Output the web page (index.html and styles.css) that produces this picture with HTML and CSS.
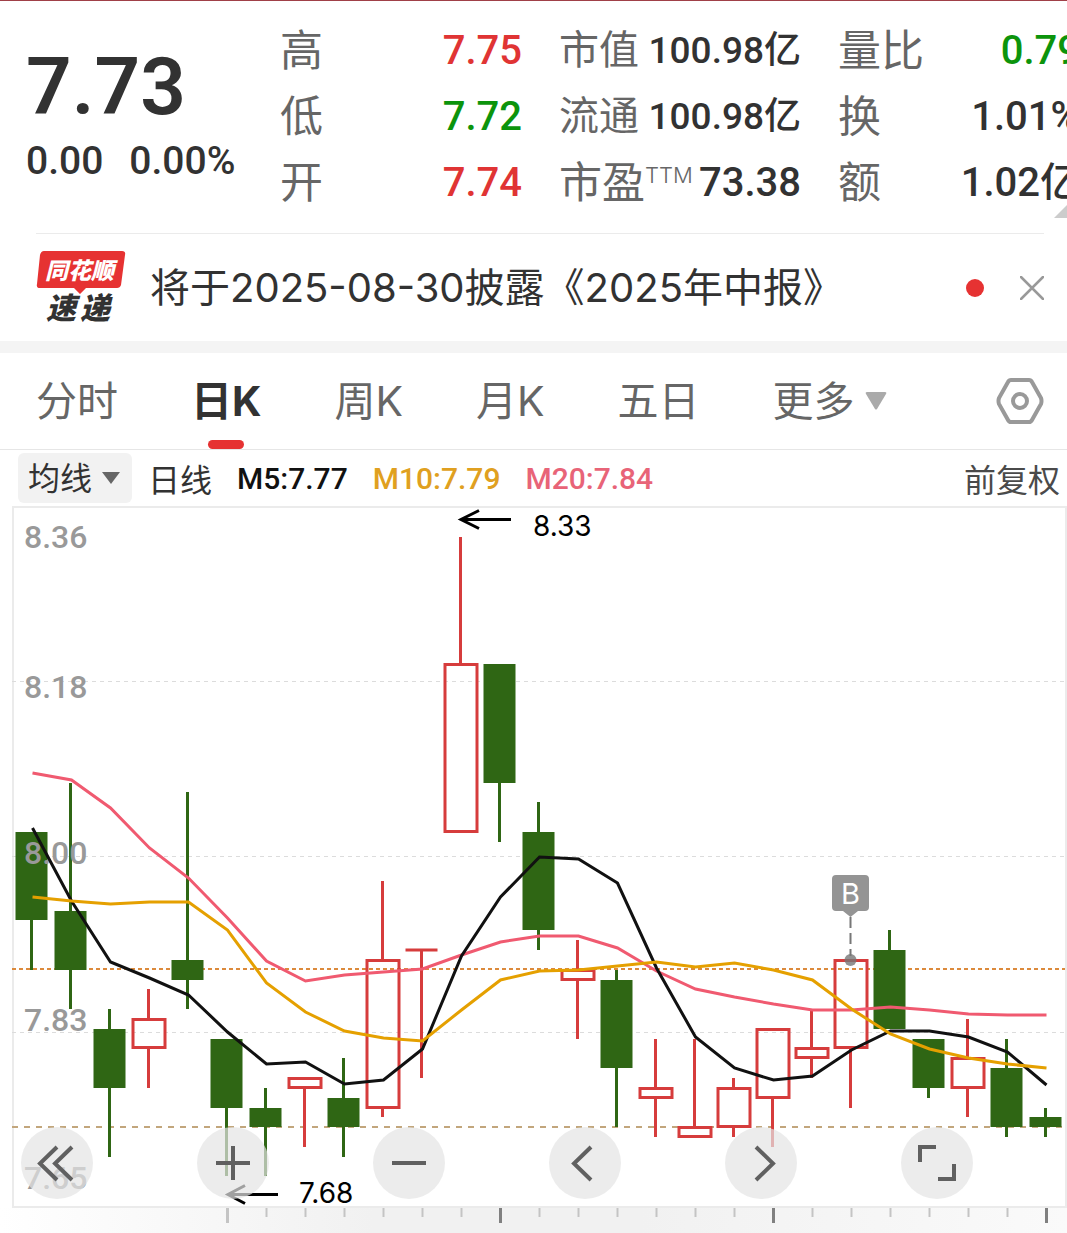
FILE: index.html
```
<!DOCTYPE html>
<html lang="zh-CN">
<head>
    <meta charset="UTF-8">
    <meta name="viewport" content="width=device-width, initial-scale=1.0">
    <title>日K</title>
    <link rel="stylesheet" href="styles.css">
</head>
<body>
    <header class="quote">
        <div class="price">
            <div class="price-now">7.73</div>
            <div class="price-change"><span>0.00</span><span>0.00%</span></div>
        </div>
        <dl class="stats">
            <div><dt>高</dt><dd class="up">7.75</dd></div>
            <div><dt>低</dt><dd class="down">7.72</dd></div>
            <div><dt>开</dt><dd class="up">7.74</dd></div>
        </dl>
        <dl class="stats">
            <div><dt class="tight">市值</dt><dd class="small">100.98亿</dd></div>
            <div><dt class="tight">流通</dt><dd class="small">100.98亿</dd></div>
            <div><dt>市盈<sup>TTM</sup></dt><dd>73.38</dd></div>
        </dl>
        <dl class="stats">
            <div><dt>量比</dt><dd class="down">0.79</dd></div>
            <div><dt>换</dt><dd>1.01%</dd></div>
            <div><dt>额</dt><dd>1.02亿</dd></div>
        </dl>
        <svg class="corner" viewBox="0 0 14 14"><path d="M14 0V14H0z" fill="#ccc"/></svg>
    </header>

    <section class="notice">
        <svg class="logo" viewBox="0 0 90 74">
            <path d="M8 0H86Q90 0 89 4L85 34Q84 37 81 37H50L44 43L38 37H4Q0 37 1 33L4 4Q5 0 8 0z" fill="#e63232"/>
            <text class="logo-top" x="9" y="28">同花顺</text>
            <text class="logo-bottom" x="10" y="68">速</text>
            <text class="logo-bottom" x="44" y="68">递</text>
        </svg>
        <a href="#" class="notice-text">将于2025-08-30披露《2025年中报》</a>
        <span class="dot"></span>
        <button class="close" aria-label="关闭">
            <svg viewBox="0 0 24 24"><path d="M1 1L23 23M23 1L1 23" fill="none" stroke="#999" stroke-width="2.5" stroke-linecap="round"/></svg>
        </button>
    </section>

    <nav class="tabs">
        <button>分时</button>
        <button class="active">日K</button>
        <button>周K</button>
        <button>月K</button>
        <button>五日</button>
        <button class="more">更多<svg viewBox="0 0 22 18"><path d="M2 0H20Q22 0 21 2L12 17Q11 18 10 17L1 2Q0 0 2 0z" fill="#aaa"/></svg></button>
        <button class="settings" aria-label="设置">
            <svg viewBox="0 0 48 46" fill="none" stroke="#999" stroke-width="4">
                <path d="M15 2H33Q35 2 36 4L45 20Q46 23 45 26L36 42Q35 44 33 44H15Q13 44 12 42L3 26Q2 23 3 20L12 4Q13 2 15 2z"/>
                <circle cx="24" cy="23" r="7"/>
            </svg>
        </button>
    </nav>

    <div class="indicators">
        <div class="select-box">
            <select aria-label="指标"><option>均线</option></select>
        </div>
        <span class="period">日线</span>
        <span class="ma ma5">M5:7.77</span>
        <span class="ma ma10">M10:7.79</span>
        <span class="ma ma20">M20:7.84</span>
        <a href="#" class="adjust">前复权</a>
    </div>

    <main class="chart">
        <svg id="kline" viewBox="0 0 1067 727">
            <defs>
                <linearGradient id="strip">
                    <stop offset="0" stop-color="#fff"/>
                    <stop offset="0.35" stop-color="#f1f1f1"/>
                    <stop offset="0.6" stop-color="#f1f1f1"/>
                    <stop offset="1" stop-color="#fafafa"/>
                </linearGradient>
            </defs>
            <rect x="0" y="701" width="1067" height="26" fill="url(#strip)"/>
            <rect x="13" y="1" width="1053" height="700" fill="#fff" stroke="#ebebeb" stroke-width="2"/>
            <path class="grid" d="M12 175.5H1065M12 350.5H1065M12 526.5H1065"/>
            <path d="M12 463H1065" stroke="#dc8a3c" stroke-width="2" stroke-dasharray="4 3"/>
            <path d="M12 621H1065" stroke="#c2a67c" stroke-width="2" stroke-dasharray="6 6"/>
            <g id="candles"></g>
            <g class="axis">
                <text x="24" y="42">8.36</text>
                <text x="24" y="192">8.18</text>
                <text x="24" y="358">8.00</text>
                <text x="24" y="525">7.83</text>
                <text x="24" y="683">7.65</text>
            </g>
            <g id="averages"></g>
            <g id="ticks"></g>
            <g class="mark">
                <path d="M511 13.5H461M479 4.5L461 13.5L479 22.5"/>
                <text x="533" y="30">8.33</text>
                <path d="M278 688.5H228M245 679.5L228 688.5L245 697.5"/>
                <text x="299" y="697">7.68</text>
            </g>
            <g>
                <path d="M850.5 411V450" stroke="#777" stroke-width="2" stroke-dasharray="11 5"/>
                <circle cx="850.5" cy="454" r="6" fill="#777" fill-opacity="0.8"/>
                <path d="M836 369H865Q869 369 869 373V401Q869 405 865 405H858L850.5 411L843 405H836Q832 405 832 401V373Q832 369 836 369z" fill="#949494"/>
                <text class="buy" x="850.5" y="398">B</text>
            </g>
        </svg>
        <div class="controls">
            <button aria-label="最早"><svg viewBox="0 0 72 72"><path d="M36 20L19 36.500L36 53M51 20L34 36.500L51 53"/></svg></button>
            <button aria-label="放大"><svg viewBox="0 0 72 72"><path d="M19 36H53M36 19V53"/></svg></button>
            <button aria-label="缩小"><svg viewBox="0 0 72 72"><path d="M19 36H53"/></svg></button>
            <button aria-label="左移"><svg viewBox="0 0 72 72"><path d="M42 20L25 36.500L42 53"/></svg></button>
            <button aria-label="右移"><svg viewBox="0 0 72 72"><path d="M31 20L48 36.500L31 53"/></svg></button>
            <button aria-label="全屏"><svg viewBox="0 0 72 72"><path d="M19 35V20H35M53 37V52H37"/></svg></button>
        </div>
    </main>

    <script>
const NS = "http://www.w3.org/2000/svg";
const STEP = 39;
const FIRST = 31.5;

// [direction, high, body top, body bottom, low]
const candles = [
    ["down", 8.03, 8.03, 7.94, 7.89],
    ["down", 8.08, 7.95, 7.89, 7.85],
    ["down", 7.85, 7.83, 7.77, 7.70],
    ["up", 7.87, 7.84, 7.81, 7.77],
    ["down", 8.07, 7.90, 7.88, 7.85],
    ["down", 7.82, 7.82, 7.75, 7.68],
    ["down", 7.77, 7.75, 7.73, 7.68],
    ["up", 7.78, 7.78, 7.77, 7.71],
    ["down", 7.80, 7.76, 7.73, 7.70],
    ["up", 7.98, 7.90, 7.75, 7.74],
    ["up", 7.91, 7.91, 7.91, 7.78],
    ["up", 8.33, 8.20, 8.03, 8.03],
    ["down", 8.20, 8.20, 8.08, 8.02],
    ["down", 8.06, 8.03, 7.93, 7.91],
    ["up", 7.92, 7.89, 7.88, 7.82],
    ["down", 7.89, 7.88, 7.79, 7.73],
    ["up", 7.82, 7.77, 7.76, 7.72],
    ["up", 7.82, 7.73, 7.72, 7.72],
    ["up", 7.78, 7.77, 7.73, 7.72],
    ["up", 7.83, 7.83, 7.76, 7.71],
    ["up", 7.85, 7.81, 7.80, 7.78],
    ["up", 7.90, 7.90, 7.81, 7.75],
    ["down", 7.93, 7.91, 7.83, 7.83],
    ["down", 7.82, 7.82, 7.77, 7.76],
    ["up", 7.84, 7.80, 7.77, 7.74],
    ["down", 7.82, 7.79, 7.73, 7.72],
    ["down", 7.75, 7.74, 7.73, 7.72]
];

const averages = {
    "#f05a70": [267, 274, 302, 342, 372, 412, 455, 475, 469, 466, 463, 449, 436, 430, 430, 442, 465, 483, 491, 498, 504, 504, 501, 504, 508, 509, 509],
    "#111111": [322, 395, 456, 472, 489, 526, 558, 556, 578, 574, 543, 450, 391, 351, 353, 377, 462, 531, 562, 574, 570, 544, 525, 525, 531, 546, 579],
    "#e5a000": [391, 395, 398, 396, 396, 424, 477, 506, 525, 532, 535, 504, 474, 465, 464, 460, 456, 461, 457, 464, 474, 503, 528, 543, 552, 558, 562]
};

function y(price) {
    return Math.round(30.5 + (8.33 - price) * 984.6);
}

function add(parent, tag, attrs) {
    const el = document.createElementNS(NS, tag);
    for (const key in attrs) el.setAttribute(key, attrs[key]);
    document.getElementById(parent).appendChild(el);
}

candles.forEach(function (c, i) {
    const x = FIRST + i * STEP;
    const top = y(c[2]);
    const bottom = y(c[3]);
    add("candles", "path", {
        class: "wick " + c[0],
        d: "M" + x + " " + y(c[1]) + "V" + top + "M" + x + " " + bottom + "V" + y(c[4])
    });
    if (c[0] === "down") {
        add("candles", "rect", { class: "body down", x: x - 16, y: top, width: 32, height: bottom - top });
    } else if (top === bottom) {
        add("candles", "path", { class: "wick up", d: "M" + (x - 16) + " " + top + "h32" });
    } else {
        add("candles", "rect", { class: "body up", x: x - 15.5, y: top + 0.5, width: 32, height: bottom - top - 1 });
    }
});

for (const color in averages) {
    add("averages", "polyline", {
        fill: "none",
        stroke: color,
        "stroke-width": 3,
        points: averages[color].map((v, i) => (FIRST + 1 + i * STEP) + "," + v).join(" ")
    });
}

for (let i = 5; i < candles.length; i++) {
    const major = (i - 5) % 7 === 0;
    add("ticks", "path", {
        d: "M" + (FIRST + 1 + i * STEP) + " 702v" + (major ? 15 : 9),
        stroke: major && i > 5 ? "#808080" : "#c4c4c4",
        "stroke-width": major ? 3 : 2
    });
}
    </script>
</body>
</html>
```
FILE: styles.css
```
* {
    box-sizing: border-box;
}
body {
    margin: 0;
    background: #fff;
    color: #323232;
    font-family: Inter, "Noto Sans CJK SC", sans-serif;
    overflow-x: hidden;
}
button {
    padding: 0;
    border: none;
    background: none;
    font-family: inherit;
    color: inherit;
    cursor: pointer;
}
a {
    color: inherit;
    text-decoration: none;
}
svg {
    display: block;
}

/* quote header, the last column runs past the right edge */
.quote {
    position: relative;
    display: grid;
    grid-template-columns: 217px repeat(3, 1fr);
    gap: 37px;
    margin-right: -13px;
    padding: 17px 0 17px 26px;
    border-top: 1px solid #a04048;
    font-family: Roboto, "Noto Sans CJK SC", sans-serif;
    white-space: nowrap;
}
.price {
    padding-top: 21px;
}
.price-now {
    font-size: 80px;
    line-height: 96px;
    font-weight: 600;
}
.price-change {
    display: flex;
    gap: 26px;
    font-size: 39px;
    line-height: 52px;
    font-weight: 500;
}
.stats {
    margin: 0;
}
.stats div {
    display: flex;
    justify-content: space-between;
    height: 66px;
    line-height: 66px;
}
.stats dt {
    font-size: 43px;
    color: #666;
}
.stats dt.tight {
    font-size: 40px;
}
.stats sup {
    font-family: Inter, sans-serif;
    font-size: 22px;
    font-weight: 300;
    line-height: 0;
    vertical-align: 15px;
}
.stats dd {
    margin: 0;
    font-size: 40px;
    font-weight: 500;
}
.stats dd.small {
    font-size: 37px;
}
.stats dd.up {
    color: #e03434;
}
.stats dd.down {
    color: #0c940c;
}
.corner {
    position: absolute;
    right: 12px;
    bottom: 15px;
    width: 14px;
    height: 14px;
}

.notice {
    display: flex;
    align-items: center;
    height: 108px;
    margin: 0 23px 0 36px;
    border-top: 1px solid #ebebeb;
}
.logo {
    width: 90px;
    height: 74px;
    margin-right: 24px;
}
.logo text {
    font-family: "Noto Sans CJK SC", sans-serif;
    font-style: italic;
    font-weight: 900;
}
.logo-top {
    font-size: 23px;
    fill: #fff;
}
.logo-bottom {
    font-size: 30px;
    fill: #323232;
}
.notice-text {
    flex: 1;
    font-size: 40px;
    line-height: 56px;
    white-space: nowrap;
}
.dot {
    width: 18px;
    height: 18px;
    margin-right: 36px;
    border-radius: 50%;
    background: #e63232;
}
.close svg {
    width: 24px;
    height: 24px;
}

.tabs {
    display: flex;
    align-items: center;
    gap: 73px;
    height: 109px;
    padding: 0 23px 0 36px;
    border-top: 12px solid #f4f4f4;
    border-bottom: 1px solid #e6e6e6;
}
.tabs button {
    position: relative;
    height: 96px;
    font-size: 41px;
    line-height: 96px;
    color: #666;
    white-space: nowrap;
}
.tabs .active {
    font-weight: 700;
    color: #323232;
}
.tabs .active::after {
    content: "";
    position: absolute;
    left: 50%;
    bottom: 0;
    width: 36px;
    height: 9px;
    margin-left: -18px;
    border-radius: 5px;
    background: #e63232;
}
.tabs .more {
    display: flex;
    align-items: center;
    gap: 10px;
}
.more svg {
    width: 22px;
    height: 18px;
}
.tabs .settings {
    margin-left: auto;
}
.settings svg {
    width: 48px;
    height: 46px;
}

.indicators {
    display: flex;
    align-items: center;
    height: 56px;
    padding: 0 7px 0 18px;
    font-size: 32px;
    white-space: nowrap;
}
.select-box {
    position: relative;
    margin-right: 16px;
}
.select-box::after {
    content: "";
    position: absolute;
    right: 12px;
    top: 19px;
    border: 9px solid transparent;
    border-top: 12px solid #666;
    border-bottom: none;
    pointer-events: none;
}
.select-box select {
    appearance: none;
    display: block;
    width: 114px;
    height: 50px;
    padding: 0 0 0 10px;
    border: none;
    border-radius: 6px;
    background: #f2f2f2;
    color: #323232;
    font-family: inherit;
    font-size: 32px;
}
.ma {
    margin-left: 25px;
    font-family: Roboto, sans-serif;
    font-size: 30px;
    font-weight: 500;
}
.ma5 {
    color: #111;
}
.ma10 {
    color: #e0a020;
}
.ma20 {
    color: #e86478;
}
.adjust {
    margin-left: auto;
    color: #4a4a4a;
}

.chart {
    position: relative;
}
#kline {
    width: 100%;
    height: auto;
}
.grid {
    stroke: #dcdcdc;
    stroke-dasharray: 4 4;
}
.wick {
    fill: none;
    stroke-width: 3;
}
.wick.up {
    stroke: #d63c3c;
}
.wick.down {
    stroke: #2f6614;
}
.body.down {
    fill: #2f6614;
}
.body.up {
    fill: none;
    stroke: #d63c3c;
    stroke-width: 3;
}
.axis {
    font-family: Roboto, sans-serif;
    font-size: 32px;
    font-weight: 500;
    fill: #999;
}
.mark {
    font-size: 28px;
    fill: #000;
}
.mark path {
    fill: none;
    stroke: #000;
    stroke-width: 3;
}
.buy {
    font-size: 29px;
    text-anchor: middle;
    fill: #fff;
}
.controls {
    position: absolute;
    left: 21px;
    bottom: 34px;
    display: flex;
    gap: 104px;
}
.controls button {
    width: 72px;
    height: 72px;
    border-radius: 50%;
    background: rgba(228, 228, 228, 0.7);
}
.controls path {
    fill: none;
    stroke: #606060;
    stroke-width: 4;
}
```
